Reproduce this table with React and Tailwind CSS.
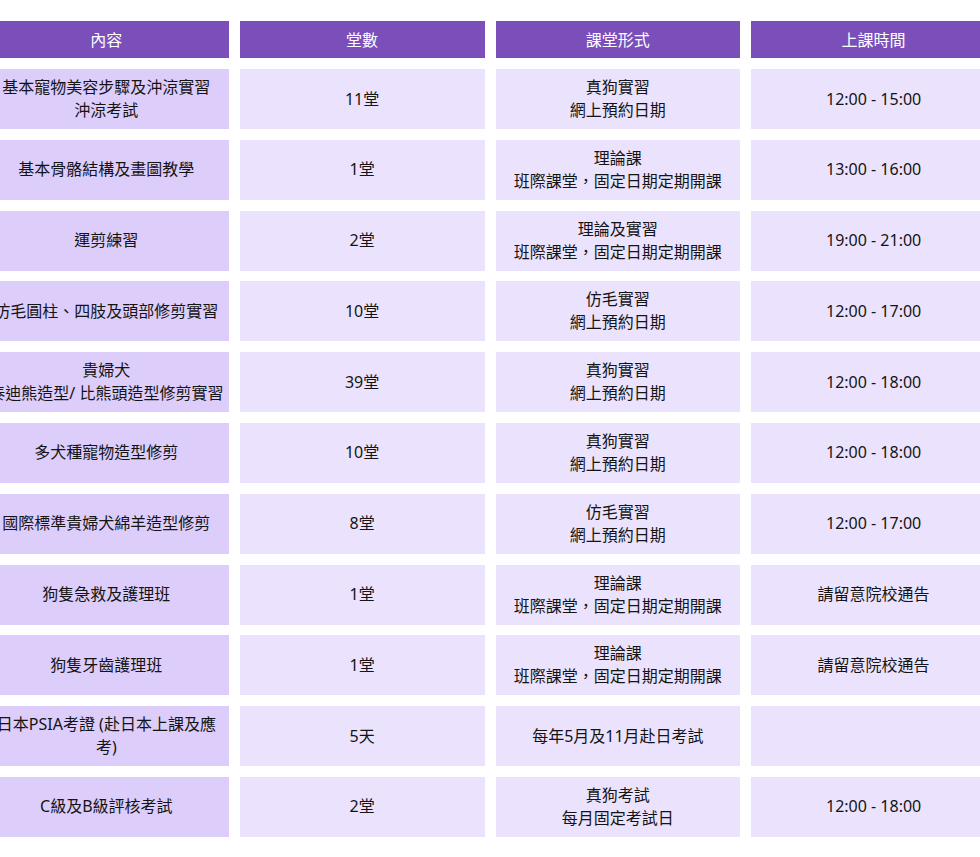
import React from 'react';

const rows = [
  [['基本寵物美容步驟及沖涼實習', '沖涼考試'], ['11堂'], ['真狗實習', '網上預約日期'], ['12:00 - 15:00']],
  [['基本骨骼結構及畫圖教學'], ['1堂'], ['理論課', '班際課堂，固定日期定期開課'], ['13:00 - 16:00']],
  [['運剪練習'], ['2堂'], ['理論及實習', '班際課堂，固定日期定期開課'], ['19:00 - 21:00']],
  [['仿毛圓柱、四肢及頭部修剪實習'], ['10堂'], ['仿毛實習', '網上預約日期'], ['12:00 - 17:00']],
  [['貴婦犬', '泰迪熊造型/ 比熊頭造型修剪實習'], ['39堂'], ['真狗實習', '網上預約日期'], ['12:00 - 18:00']],
  [['多犬種寵物造型修剪'], ['10堂'], ['真狗實習', '網上預約日期'], ['12:00 - 18:00']],
  [['國際標準貴婦犬綿羊造型修剪'], ['8堂'], ['仿毛實習', '網上預約日期'], ['12:00 - 17:00']],
  [['狗隻急救及護理班'], ['1堂'], ['理論課', '班際課堂，固定日期定期開課'], ['請留意院校通告']],
  [['狗隻牙齒護理班'], ['1堂'], ['理論課', '班際課堂，固定日期定期開課'], ['請留意院校通告']],
  [['日本PSIA考證 (赴日本上課及應', '考)'], ['5天'], ['每年5月及11月赴日考試'], []],
  [['C級及B級評核考試'], ['2堂'], ['真狗考試', '每月固定考試日'], ['12:00 - 18:00']],
];

const headers = ['內容', '堂數', '課堂形式', '上課時間'];

function Cell({ lines, first }) {
  return (
    <div
      className={`flex h-[60px] flex-col items-center justify-center overflow-hidden text-center text-[16px] leading-[23px] text-[#141414] ${
        first ? 'bg-[#dccdfb]' : 'bg-[#ebe3fd]'
      }`}
    >
      {lines.map((l, i) => (
        <span key={i} className="whitespace-nowrap">{l}</span>
      ))}
    </div>
  );
}

export default function App() {
  return (
    <div
      className="h-[857px] w-[980px] overflow-hidden bg-white"
      style={{ fontFamily: '"Noto Sans", "Noto Sans CJK TC", sans-serif' }}
    >
      {/* header row */}
      <div className="ml-[-16px] mt-[21px] grid w-[1012px] grid-cols-4 gap-x-[11px]">
        {headers.map((h) => (
          <div key={h} className="flex h-[37px] items-center justify-center bg-[#7a4fba] text-[16px] text-white">
            {h}
          </div>
        ))}
      </div>
      {/* body */}
      <div className="ml-[-16px] mt-[11px] flex w-[1012px] flex-col gap-y-[10.8px]">
        {rows.map((r, i) => (
          <div key={i} className="grid grid-cols-4 gap-x-[11px]">
            {r.map((c, j) => (
              <Cell key={j} lines={c} first={j === 0} />
            ))}
          </div>
        ))}
      </div>
    </div>
  );
}
